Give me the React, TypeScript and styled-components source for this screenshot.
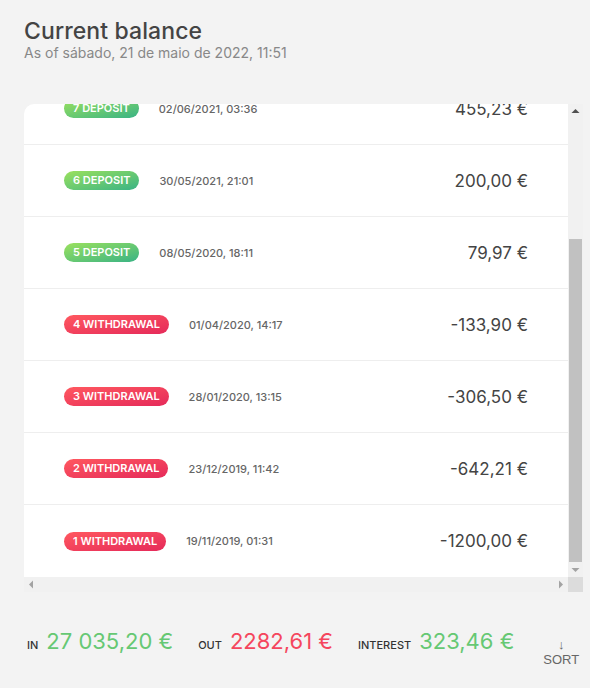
import React, { useLayoutEffect, useRef, useState } from 'react';
import styled, { createGlobalStyle } from 'styled-components';

const GlobalStyle = createGlobalStyle`
  * {
    margin: 0;
    padding: 0;
    box-sizing: border-box;
  }

  body {
    background-color: #f3f3f3;
    font-family: Inter, "Noto Sans", sans-serif;
    color: #444;
  }
`;

const LIST_HEIGHT = 473;
const BAR = 15;

const Page = styled.main`
  padding: 16px 7px 0 24px;
`;

const BalanceLabel = styled.p`
  font-size: 23px;
  line-height: 30px;
  font-weight: 500;
  letter-spacing: 0.1px;
`;

const BalanceDate = styled.p`
  margin-top: -3px;
  font-size: 14px;
  line-height: 20px;
  color: #888;
`;

const Panel = styled.section`
  display: grid;
  grid-template-columns: 1fr ${BAR}px;
  grid-template-rows: ${LIST_HEIGHT}px ${BAR}px;
  margin-top: 41px;
  border-radius: 10px 0 0 0;
  overflow: hidden;
  background-color: #f1f1f1;
`;

const List = styled.div`
  overflow: hidden;
  background-color: #fff;
`;

interface BarProps {
  readonly vertical?: boolean;
}

const ScrollBar = styled.div<BarProps>`
  display: flex;
  flex-direction: ${(props) => (props.vertical ? 'column' : 'row')};
  background-color: #f1f1f1;
`;

const Track = styled.div<BarProps>`
  flex: 1;
  display: flex;
  flex-direction: column;
  justify-content: flex-end;
  padding: ${(props) => (props.vertical ? '0 1px' : '1px 0')};
`;

const Thumb = styled.div`
  background-color: #c1c1c1;
`;

const ArrowButton = styled.div`
  display: flex;
  align-items: center;
  justify-content: center;
  width: ${BAR}px;
  height: ${BAR}px;
  flex-shrink: 0;
`;

const Corner = styled.div`
  background-color: #dcdcdc;
`;

const Row = styled.div`
  display: flex;
  align-items: center;
  height: 72px;
  padding: 0 40px;
  border-bottom: 1px solid #eee;

  &:last-child {
    border-bottom: none;
  }
`;

interface TypeProps {
  readonly deposit?: boolean;
}

const Type = styled.span<TypeProps>`
  margin-right: 20px;
  padding: 1px 9px;
  border-radius: 100px;
  color: #fff;
  font-size: 11px;
  line-height: 17px;
  font-weight: 600;
  text-transform: uppercase;
  background-image: ${(props) =>
    props.deposit
      ? 'linear-gradient(to top left, #39b385, #9be15d)'
      : 'linear-gradient(to top left, #e52a5a, #ff585f)'};
`;

const MovDate = styled.span`
  font-size: 11px;
  font-weight: 500;
  color: #666;
`;

const MovValue = styled.span`
  margin-left: auto;
  font-size: 17px;
  line-height: 26px;
`;

const Summary = styled.section`
  display: flex;
  align-items: baseline;
  margin-top: 34px;
  padding: 0 3px;
  white-space: nowrap;
`;

const SummaryLabel = styled.span`
  margin-right: 8px;
  font-size: 11px;
  font-weight: 500;
  text-transform: uppercase;
  color: #333;
`;

interface SummaryValueProps {
  readonly out?: boolean;
}

const SummaryValue = styled.span<SummaryValueProps>`
  flex-shrink: 0;
  margin-right: 25px;
  font-size: 22px;
  line-height: 30px;
  color: ${(props) => (props.out ? '#f5465d' : '#66c873')};
`;

const SortButton = styled.button`
  display: flex;
  flex-direction: column;
  align-items: center;
  margin-left: auto;
  padding: 0 6px 0 4px;
  border: none;
  background: none;
  color: #666;
  font-family: "Liberation Sans", Arial, sans-serif;
  font-size: 13px;
  cursor: pointer;
`;

type Dir = 'up' | 'down' | 'left' | 'right';

const arrowPoints: Record<Dir, string> = {
  up: '3.5,9 7.5,5 11.5,9',
  down: '3.5,6 7.5,10 11.5,6',
  left: '9,3.5 5,7.5 9,11.5',
  right: '6,3.5 10,7.5 6,11.5',
};

function Arrow({ dir, active }: { dir: Dir; active?: boolean }) {
  return (
    <ArrowButton>
      <svg width={BAR} height={BAR} viewBox="0 0 15 15">
        <polygon points={arrowPoints[dir]} fill={active ? '#505050' : '#a3a3a3'} />
      </svg>
    </ArrowButton>
  );
}

const movements = [
  { id: 9, value: '25 000,00 €', date: '25/01/2022, 14:18' },
  { id: 8, value: '1300,00 €', date: '11/07/2021, 10:51' },
  { id: 7, value: '455,23 €', date: '02/06/2021, 03:36' },
  { id: 6, value: '200,00 €', date: '30/05/2021, 21:01' },
  { id: 5, value: '79,97 €', date: '08/05/2020, 18:11' },
  { id: 4, value: '-133,90 €', date: '01/04/2020, 14:17' },
  { id: 3, value: '-306,50 €', date: '28/01/2020, 13:15' },
  { id: 2, value: '-642,21 €', date: '23/12/2019, 11:42' },
  { id: 1, value: '-1200,00 €', date: '19/11/2019, 01:31' },
];

export default function App(): JSX.Element {
  const listRef = useRef<HTMLDivElement>(null);
  const [thumbRatio, setThumbRatio] = useState(0.72);

  // scrolled to the bottom of the list, like the screenshot
  useLayoutEffect(() => {
    const el = listRef.current;
    if (el) {
      el.scrollTop = el.scrollHeight;
      setThumbRatio(el.clientHeight / el.scrollHeight);
    }
  }, []);

  return (
    <>
      <GlobalStyle />
      <Page>
        <BalanceLabel>Current balance</BalanceLabel>
        <BalanceDate>As of sábado, 21 de maio de 2022, 11:51</BalanceDate>

        <Panel>
          <List ref={listRef}>
            {movements.map((mov) => {
              const deposit = !mov.value.startsWith('-');
              return (
                <Row key={mov.id}>
                  <Type deposit={deposit}>
                    {mov.id} {deposit ? 'deposit' : 'withdrawal'}
                  </Type>
                  <MovDate>{mov.date}</MovDate>
                  <MovValue>{mov.value}</MovValue>
                </Row>
              );
            })}
          </List>
          <ScrollBar vertical>
            <Arrow dir="up" active />
            <Track vertical>
              <Thumb style={{ height: `${thumbRatio * 100}%` }} />
            </Track>
            <Arrow dir="down" />
          </ScrollBar>
          <ScrollBar>
            <Arrow dir="left" />
            <Track />
            <Arrow dir="right" />
          </ScrollBar>
          <Corner />
        </Panel>

        <Summary>
          <SummaryLabel>In</SummaryLabel>
          <SummaryValue>27 035,20 €</SummaryValue>
          <SummaryLabel>Out</SummaryLabel>
          <SummaryValue out>2282,61 €</SummaryValue>
          <SummaryLabel>Interest</SummaryLabel>
          <SummaryValue>323,46 €</SummaryValue>
          <SortButton>
            <span>↓</span>
            <span>SORT</span>
          </SortButton>
        </Summary>
      </Page>
    </>
  );
}
